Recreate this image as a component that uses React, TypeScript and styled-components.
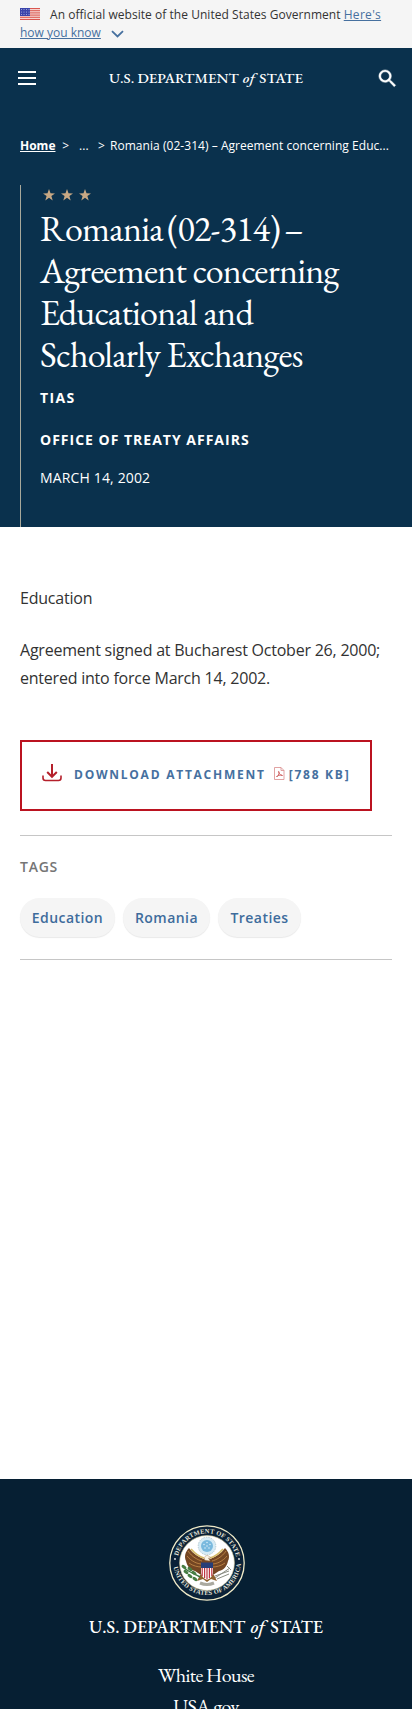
import React from "react";
import styled, { createGlobalStyle } from "styled-components";

const sans = `"Open Sans", sans-serif`;
const serif = `"EB Garamond", "Liberation Serif", serif`;

const GlobalStyle = createGlobalStyle`
  *, *::before, *::after { box-sizing: border-box; }
  body { margin: 0; background: #fff; font-family: ${sans}; color: #323a45; }
  a { color: inherit; }
  p, h1, ul { margin: 0; padding: 0; }
`;

const Page = styled.div`
  display: flex;
  flex-direction: column;
  height: 1709px;
  overflow: hidden;
`;

const Banner = styled.div`
  height: 48px;
  padding: 6px 20px 0;
  background: #f5f5f5;
  color: #333;
  font-size: 12px;
  line-height: 18px;
  svg { vertical-align: -1px; }
`;

const BannerText = styled.span`
  letter-spacing: 0.04px;
`;

const Flag = styled.svg`
  margin-right: 10px;
`;

const BannerLink = styled.a`
  color: #46709f;
`;

const LinkPart = styled.span<{ $spacing: number }>`
  letter-spacing: ${(p) => p.$spacing}px;
`;

const Chevron = styled.svg`
  margin-left: 10px;
`;

const Hero = styled.div`
  height: 479px;
  background: #0a314d;
  color: #fff;
  display: flex;
  flex-direction: column;
`;

const TopBar = styled.header`
  height: 60px;
  padding: 0 13px 0 18px;
  display: flex;
  align-items: center;
  justify-content: space-between;
`;

const MenuButton = styled.button`
  width: 18px;
  height: 14px;
  padding: 0;
  border: 0;
  background: none;
  display: flex;
  flex-direction: column;
  justify-content: space-between;
  span { height: 2px; background: #fff; }
`;

const SearchButton = styled.button`
  padding: 0;
  border: 0;
  background: none;
  color: #fff;
  display: flex;
`;

const Wordmark = styled.svg`
  display: block;
  overflow: visible;
  font-family: ${serif};
`;

const Crumbs = styled.nav`
  margin-top: 28px;
  padding: 0 20px;
  display: flex;
  font-size: 12px;
  line-height: 20px;
  white-space: pre;
`;

const HomeLink = styled.a`
  font-weight: 700;
  width: 36px;
`;

const Crumb = styled.span<{ $width?: number }>`
  width: ${(p) => (p.$width ? `${p.$width}px` : "282px")};
  letter-spacing: 0.045px;
`;

const Article = styled.div`
  flex: 1;
  margin: 29px 20px 0;
  padding: 4px 0 0 19px;
  border-left: 1px solid #a9a99b;
`;

const Stars = styled.svg`
  display: block;
  margin-left: 3px;
`;

const Title = styled.h1`
  margin-top: 7px;
  width: 310px;
  font-family: ${serif};
  font-weight: 400;
  font-size: 36px;
  line-height: 42px;
  letter-spacing: -0.73px;
`;

const TitleLead = styled.span`
  word-spacing: -2.5px;
`;

const Meta = styled.p<{ $bold?: boolean; $top: number; $spacing: number }>`
  margin-top: ${(p) => p.$top}px;
  font-size: 14px;
  line-height: 20px;
  font-weight: ${(p) => (p.$bold ? 700 : 400)};
  letter-spacing: ${(p) => p.$spacing}px;
  text-transform: uppercase;
`;

const Main = styled.main`
  flex: 1;
  padding: 57px 20px 0;
`;

const Paragraph = styled.p`
  margin-bottom: 24px;
  font-size: 16px;
  line-height: 28px;
  color: #323232;
  letter-spacing: -0.22px;
`;

const Download = styled.a`
  margin-top: 48px;
  width: 352px;
  height: 71px;
  padding: 0 0 2px 20px;
  border: 2px solid #bb1320;
  display: flex;
  align-items: center;
  color: #46709f;
  font-size: 12px;
  font-weight: 700;
  letter-spacing: 1.75px;
  text-decoration: none;
  white-space: nowrap;
`;

const DownloadIcon = styled.svg`
  margin-bottom: 4px;
`;

const PdfIcon = styled.svg`
  margin-bottom: 3px;
`;

const DownloadLabel = styled.span`
  margin: 0 8px 0 12px;
`;

const FileSize = styled.span`
  margin-left: 4px;
`;

const TagSection = styled.section`
  margin-top: 24px;
  height: 125px;
  border: solid #c6c6c6;
  border-width: 1px 0;
  padding-top: 21px;
`;

const TagHeading = styled.p`
  font-size: 14px;
  line-height: 20px;
  font-weight: 600;
  letter-spacing: 0.75px;
  color: #757575;
`;

const TagList = styled.ul`
  margin-top: 21px;
  display: flex;
  gap: 8px;
  list-style: none;
`;

const Tag = styled.li<{ $width: number }>`
  width: ${(p) => p.$width}px;
  height: 39px;
  border-radius: 20px;
  background: #f5f5f5;
  box-shadow: 0 1px 1px #e9e9e9;
  color: #3e6c9c;
  font-size: 14px;
  font-weight: 600;
  letter-spacing: 0.45px;
  line-height: 40px;
  text-align: center;
`;

const Footer = styled.footer`
  height: 230px;
  padding-top: 46px;
  background: #061f33;
  color: #fff;
  display: flex;
  flex-direction: column;
  align-items: center;
  overflow: hidden;
`;

const SealImage = styled.svg`
  margin: 0 0 17px 2px;
  flex: none;
`;

const FooterLinks = styled.nav`
  margin-top: 22px;
  font-family: ${serif};
  font-size: 20px;
  line-height: 31px;
  letter-spacing: -0.6px;
  text-align: center;
`;

const FooterLink = styled.a`
  display: block;
`;

const starPoints = "6,0 7.5,4.3 12,4.4 8.4,7.1 9.7,11.4 6,8.8 2.3,11.4 3.6,7.1 0,4.4 4.5,4.3";

function DepartmentName({ width }: { width: number }) {
  const size = width * 0.0775;
  return (
    <Wordmark width={width} height={20} fill="#fff" fontSize={size} fontWeight="500">
      <text x="0" y="15" textLength={width * 0.668} lengthAdjust="spacingAndGlyphs">U.S. DEPARTMENT</text>
      <text x={width * 0.69} y="15" fontStyle="italic" textLength={width * 0.062} lengthAdjust="spacingAndGlyphs">of</text>
      <text x={width * 0.775} y="15" textLength={width * 0.225} lengthAdjust="spacingAndGlyphs">STATE</text>
    </Wordmark>
  );
}

function UsFlag() {
  return (
    <Flag width="20" height="12" viewBox="0 0 20 12">
      <rect width="20" height="12" fill="#f6d4d0" />
      {[0, 2.2, 4.4, 6.6, 8.8, 11].map((y) => (
        <rect key={y} y={y} width="20" height="1" fill="#d9564f" />
      ))}
      <rect width="10" height="8" fill="#3a44ab" />
      {[1.5, 4, 6.5, 9].map((x) =>
        [1.5, 4, 6.5].map((y) => <circle key={`${x}-${y}`} cx={x} cy={y} r=".5" fill="#b9bfe6" />)
      )}
    </Flag>
  );
}

function Seal() {
  return (
    <SealImage width="76" height="76" viewBox="0 0 76 76">
      <defs>
        <path id="sealTop" d="M8.3 38a29.7 29.7 0 0 1 59.4 0" />
        <path id="sealBottom" d="M4 36a34 34 0 0 0 68 0" />
      </defs>
      <circle cx="38" cy="38" r="37.2" fill="#0b2238" stroke="#efeac8" strokeWidth="1.3" />
      <circle cx="38" cy="38" r="27.4" fill="#fff" stroke="#d8cf9c" strokeWidth=".6" />
      <g fill="#e6e6dc" fontFamily="Liberation Serif, serif" fontSize="6.4" fontWeight="700">
        <text textLength="80">
          <textPath href="#sealTop" startOffset="7">DEPARTMENT OF STATE</textPath>
        </text>
        <text textLength="98">
          <textPath href="#sealBottom" startOffset="6">UNITED STATES OF AMERICA</textPath>
        </text>
      </g>
      <circle cx="6" cy="34" r=".9" fill="#eee" />
      <circle cx="70" cy="34" r=".9" fill="#eee" />
      <circle cx="38" cy="21" r="8.8" fill="#d6ebf5" stroke="#9fb7c0" strokeWidth=".7" strokeDasharray="1.5 1" />
      <circle cx="38" cy="21" r="6" fill="#79b9de" />
      <g fill="#e8f5fb">
        {[[38, 17.5], [35, 19.5], [41, 19.5], [36, 23], [40, 23], [38, 21]].map(([x, y]) => (
          <circle key={`${x}-${y}`} cx={x} cy={y} r=".7" />
        ))}
      </g>
      <path d="M35 34C30 32 24 29 20 23C16 27 15 32 17 36C18 41 21 45 26 46L32 50L44 50L50 46C55 45 58 41 59 36C61 32 60 27 56 23C52 29 46 32 41 34L38 31Z" fill="#744623" />
      <g stroke="#bd8546" strokeWidth=".9" fill="none">
        <path d="M19 26C23 32 29 35 33 36M18 31C22 36 28 39 33 39M20 38C24 41 29 42 33 42M57 26C53 32 47 35 43 36M58 31C54 36 48 39 43 39M56 38C52 41 47 42 43 42" />
      </g>
      <path d="M22 24Q28 31 35 33M54 24Q48 31 41 33" stroke="#d7bc6a" strokeWidth="1.8" fill="none" />
      <path d="M31 50L28 56L34 54L38 57L42 54L48 56L45 50Z" fill="#8e612e" />
      <path d="M35.5 35Q35 30 38.8 30.5L42 32.5L39.5 33L41 36Z" fill="#f8f3e6" stroke="#a38253" strokeWidth=".4" />
      <path d="M32 38H44V48Q43 53 38 55Q33 53 32 48Z" fill="#fff" />
      <path d="M33.2 42V51M35.6 42V53M38 42V54.5M40.4 42V53M42.8 42V51" stroke="#bd3440" strokeWidth="1.2" />
      <path d="M32 37.5H44V43H32Z" fill="#263e78" />
      <path d="M31 52C26 49 20 47 15 43" fill="none" stroke="#3f7640" strokeWidth="1.5" />
      <g fill="#477d43">
        {[[15, 42], [17, 47], [21, 44], [21, 51], [25, 48], [26, 54]].map(([x, y]) => (
          <ellipse key={`${x}-${y}`} cx={x} cy={y} rx="2.8" ry="1.6" transform={`rotate(35 ${x} ${y})`} />
        ))}
      </g>
      <path d="M46 53L61 43M46 51L60 46M48 54L60 49M58 41L62 45" stroke="#898c81" strokeWidth="1" />
      <path d="M31 58Q38 61 45 58" fill="none" stroke="#aaa9a0" strokeWidth="3" />
    </SealImage>
  );
}

export default function App() {
  return (
    <Page>
      <GlobalStyle />
      <Banner>
        <UsFlag />
        <BannerText>An official website of the United States Government </BannerText>
        <BannerLink href="#">
          <LinkPart $spacing={0.3}>Here's </LinkPart>
          <LinkPart $spacing={0}>how you know</LinkPart>
        </BannerLink>
        <Chevron width="13" height="8" viewBox="0 0 13 8" fill="none" stroke="#46709f" strokeWidth="1.8">
          <path d="M1 1.2L6.5 6.4L12 1.2" />
        </Chevron>
      </Banner>
      <Hero>
        <TopBar>
          <MenuButton aria-label="Menu"><span /><span /><span /></MenuButton>
          <DepartmentName width={194} />
          <SearchButton aria-label="Search">
            <svg width="23" height="23" viewBox="0 0 24 24" fill="currentColor" stroke="currentColor" strokeWidth=".5">
              <path d="M15.5 14h-.79l-.28-.27A6.471 6.471 0 0 0 16 9.5 6.5 6.5 0 1 0 9.5 16c1.61 0 3.09-.59 4.23-1.57l.27.28v.79l5 4.99L20.49 19l-4.99-5zm-6 0C7.01 14 5 11.99 5 9.5S7.01 5 9.5 5 14 7.01 14 9.5 11.99 14 9.5 14z" />
            </svg>
          </SearchButton>
        </TopBar>
        <Crumbs>
          <HomeLink href="#">Home</HomeLink>
          <Crumb $width={23}>{"  >"}</Crumb>
          <Crumb $width={19}>...</Crumb>
          <Crumb $width={12}>&gt;</Crumb>
          <Crumb>Romania (02-314) – Agreement concerning Educ...</Crumb>
        </Crumbs>
        <Article>
          <Stars width="50" height="12" fill="#c8a884">
            {[0, 18, 36].map((x) => (
              <polygon key={x} points={starPoints} transform={`translate(${x} 0)`} />
            ))}
          </Stars>
          <Title>
            <TitleLead>Romania (02-314) –</TitleLead> Agreement concerning Educational and Scholarly Exchanges
          </Title>
          <Meta $bold $top={12} $spacing={1.4}>TIAS</Meta>
          <Meta $bold $top={22} $spacing={1}>Office of Treaty Affairs</Meta>
          <Meta $top={18} $spacing={0.15}>March 14, 2002</Meta>
        </Article>
      </Hero>
      <Main>
        <Paragraph>Education</Paragraph>
        <Paragraph>Agreement signed at Bucharest October 26, 2000; entered into force March 14, 2002.</Paragraph>
        <Download href="#">
          <DownloadIcon width="20" height="18" viewBox="0 0 20 18" fill="none" stroke="#b5202b" strokeWidth="2">
            <path d="M10 0V12.5M5.2 8L10 12.8L14.8 8" />
            <path d="M1 11.5V14Q1 16.5 3.5 16.5H16.5Q19 16.5 19 14V11.5" strokeWidth="1.6" />
          </DownloadIcon>
          <DownloadLabel>DOWNLOAD ATTACHMENT</DownloadLabel>
          <PdfIcon width="11" height="13" viewBox="0 0 11 13" fill="none" stroke="#d98b8b" strokeWidth=".8">
            <path d="M.5 .5H7L10 3.5V12.5H.5ZM7 .5V3.5H10" />
            <path d="M2.5 10C5 8 6 5 4.8 4.5S5 8 8.5 8.5C6 7.5 3.5 8.5 2.5 10Z" stroke="#c84d4d" />
          </PdfIcon>
          <FileSize>[788 KB]</FileSize>
        </Download>
        <TagSection>
          <TagHeading>TAGS</TagHeading>
          <TagList>
            <Tag $width={95}>Education</Tag>
            <Tag $width={87}>Romania</Tag>
            <Tag $width={83}>Treaties</Tag>
          </TagList>
        </TagSection>
      </Main>
      <Footer>
        <Seal />
        <DepartmentName width={234} />
        <FooterLinks>
          <FooterLink>White House</FooterLink>
          <FooterLink>USA.gov</FooterLink>
        </FooterLinks>
      </Footer>
    </Page>
  );
}
